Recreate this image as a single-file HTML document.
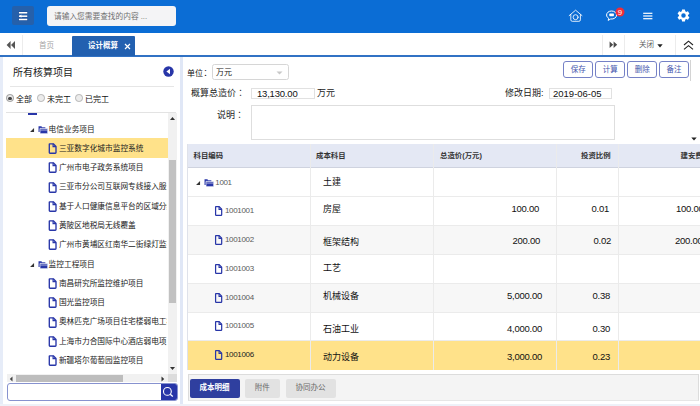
<!DOCTYPE html>
<html lang="zh-CN">
<head>
<meta charset="utf-8">
<title>设计概算</title>
<style>
*{box-sizing:border-box;margin:0;padding:0}
html,body{width:700px;height:406px;overflow:hidden;background:#fff}
body{font-family:"Liberation Sans","Noto Sans CJK SC",sans-serif;font-size:9px;color:#222;position:relative}
.abs{position:absolute}
.jp{font-family:"Noto Sans CJK JP","Noto Sans CJK SC",sans-serif}
#hdr{left:0;top:0;width:700px;height:33px;background:#0b6dd5}
#menu{left:12.2px;top:6.3px;width:22px;height:19px;background:#2560ab;border-radius:2px}
#search{left:47px;top:6px;width:129px;height:20px;background:#f4f4f6;border-radius:3px;font-size:7.7px;color:#707070;line-height:22.6px;padding-left:7px;overflow:hidden;white-space:nowrap}
#tabs{left:0;top:33px;width:700px;height:23px;background:#fff}
#tabline{left:0;top:55px;width:700px;height:2.6px;background:#3172c4}
.vsep{width:1px;background:#ececec;top:35px;height:20px}
#tab1{left:22px;top:35px;width:49px;height:20px;font-size:7.5px;color:#a5a5a5;line-height:21px;text-align:center}
#tab2{left:72px;top:36px;width:63px;height:20px;background:#2260b0;color:#fff;font-size:7.5px;font-weight:bold;line-height:20.5px;padding-left:16px;white-space:nowrap;border-radius:1px 1px 0 0}
#body{left:0;top:57px;width:700px;height:349px;background:#e6ecf8}
#left{left:3.4px;top:57px;width:176.6px;height:347.3px;background:#fff}
#strip{left:180px;top:57px;width:3.2px;height:349px;background:#e0e7f6}
#main{left:183.2px;top:57px;width:516.8px;height:347.3px;background:#fff}
.lbl{font-size:9px;color:#222;white-space:nowrap}
.tree{font-size:7.7px;color:#222;white-space:nowrap;line-height:12px}
.btn{top:61.3px;height:16.3px;width:30px;border:1px solid #7581c6;border-radius:3px;background:#fff;color:#4656ad;font-size:7.5px;line-height:15.4px;text-align:center;white-space:nowrap}
.th{top:144.4px;height:23px;font-size:7.4px;font-weight:bold;color:#333;line-height:23px;white-space:nowrap}
.row{left:187px;width:513px;height:29px}
.cell{font-size:9px;color:#111;white-space:nowrap;line-height:14px}
.code{font-size:8px;letter-spacing:-0.34px;color:#5a5a5a;white-space:nowrap;line-height:12px}
.num{font-size:9.5px;letter-spacing:-0.25px;color:#111;white-space:nowrap;text-align:right;line-height:14px}
.bbtn{top:379px;height:18.5px;font-size:7.5px;line-height:18.5px;text-align:center;white-space:nowrap;border-radius:1px}
</style>
</head>
<body>
<!-- header -->
<div id="hdr" class="abs"></div>
<div id="menu" class="abs">
<svg width="22" height="19" viewBox="0 0 22 19" style="display:block"><g fill="#1a4a94"><rect x="6.4" y="5.6" width="9.4" height="2.4"/><rect x="6.4" y="9" width="9.4" height="2.4"/><rect x="6.4" y="12.3" width="9.4" height="2.4"/></g><g fill="#fff"><rect x="6.9" y="6" width="8.4" height="1.55"/><rect x="6.9" y="9.4" width="8.4" height="1.55"/><rect x="6.9" y="12.7" width="8.4" height="1.55"/><path d="M7.2 10.2 L9.4 8.6 L9.4 11.8Z"/></g></svg>
</div>
<div id="search" class="abs">请输入您需要查找的内容 ...</div>

<!-- header icons -->
<svg class="abs" style="left:566px;top:6px" width="20" height="20" viewBox="0 0 20 20"><g fill="none" stroke="#fff" stroke-opacity="0.9" stroke-width="0.95" stroke-linejoin="round" stroke-linecap="round"><path d="M3.2 9.6 L9.6 4.2 L16 9.6"/><path d="M4.8 8.6 V13.8 Q4.8 15.3 6.3 15.3 H12.9 Q14.4 15.3 14.4 13.8 V8.6"/><circle cx="9.6" cy="11.2" r="2.5"/></g></svg>
<svg class="abs" style="left:603px;top:4px" width="26" height="22" viewBox="0 0 26 22"><path d="M8.5 7 C5.5 7 3.6 8.9 3.6 11 C3.6 12.4 4.4 13.6 5.7 14.3 L5.2 16.4 L7.6 15 C10.8 15.4 13.6 13.6 13.6 11 C13.6 8.8 11.4 7 8.5 7Z" fill="none" stroke="#fff" stroke-width="1"/><rect x="6.3" y="9.6" width="4.6" height="2.6" rx="0.6" fill="#fff"/><circle cx="17" cy="8" r="4.5" fill="#ee2d3a"/><text x="17" y="10.8" font-size="7.8" fill="#fff" text-anchor="middle" font-family="Liberation Sans, sans-serif">9</text></svg>
<svg class="abs" style="left:642px;top:10px" width="12" height="12" viewBox="0 0 12 12"><g fill="#fff"><rect x="1.2" y="2.7" width="9.2" height="1.2"/><rect x="1.2" y="5.4" width="9.2" height="1.2"/><rect x="1.2" y="8.1" width="9.2" height="1.2"/></g></svg>
<svg class="abs" style="left:676.2px;top:8.3px" width="15" height="15" viewBox="0 0 24 24"><path fill="#fff" d="M19.14 12.94c.04-.3.06-.61.06-.94 0-.32-.02-.64-.07-.94l2.03-1.58a.49.49 0 0 0 .12-.61l-1.92-3.32a.49.49 0 0 0-.59-.22l-2.39.96c-.5-.38-1.03-.7-1.62-.94l-.36-2.54a.48.48 0 0 0-.48-.41h-3.84c-.24 0-.43.17-.47.41l-.36 2.54c-.59.24-1.13.57-1.62.94l-2.39-.96a.49.49 0 0 0-.59.22L2.74 8.87c-.12.21-.08.47.12.61l2.03 1.58c-.05.3-.09.63-.09.94s.02.64.07.94l-2.03 1.58a.49.49 0 0 0-.12.61l1.92 3.32c.12.22.37.29.59.22l2.39-.96c.5.38 1.03.7 1.62.94l.36 2.54c.05.24.24.41.48.41h3.84c.24 0 .44-.17.47-.41l.36-2.54c.59-.24 1.13-.56 1.62-.94l2.39.96c.22.08.47 0 .59-.22l1.92-3.32c.12-.22.07-.47-.12-.61l-2.01-1.58zM12 15.6A3.6 3.6 0 1 1 12 8.4a3.6 3.6 0 0 1 0 7.2z"/></svg>

<!-- tab bar -->
<div id="tabs" class="abs"></div>
<div id="tabline" class="abs"></div>
<svg class="abs" style="left:6px;top:40px" width="10" height="10" viewBox="0 0 10 10"><path d="M4.6 1 L4.6 9 L0.6 5Z M9 1 L9 9 L5 5Z" fill="#555"/></svg>
<div class="abs vsep" style="left:22px"></div>
<div id="tab1" class="abs">首页</div>
<div id="tab2" class="abs">设计概算<svg style="position:absolute;left:52.2px;top:7.3px" width="7" height="7" viewBox="0 0 7 7"><path d="M1 1 L6 6 M6 1 L1 6" stroke="#fff" stroke-width="1.2" fill="none"/></svg></div>
<div class="abs vsep" style="left:602px"></div>
<svg class="abs" style="left:609.2px;top:41.4px" width="9" height="7.4" viewBox="0 0 9 7" preserveAspectRatio="none"><path d="M0.6 0.4 L4.2 3.5 L0.6 6.6Z M4.6 0.4 L8.2 3.5 L4.6 6.6Z" fill="#4a4a4a"/></svg>
<div class="abs vsep" style="left:624px"></div>
<div class="abs" style="left:639px;top:39.2px;font-size:7.5px;color:#606060;line-height:12px;white-space:nowrap">关闭</div>
<svg class="abs" style="left:656.5px;top:44px" width="6" height="4" viewBox="0 0 6 4"><path d="M0.3 0.3 L5.7 0.3 L3 3.6Z" fill="#222"/></svg>
<div class="abs vsep" style="left:675px"></div>
<svg class="abs" style="left:683px;top:40px" width="11" height="11" viewBox="0 0 11 11"><path d="M1 5 L5.5 1.2 L10 5 M1 9.4 L5.5 5.6 L10 9.4" stroke="#222" stroke-width="1.1" fill="none"/></svg>

<!-- body -->
<div id="body" class="abs"></div>
<div id="left" class="abs"></div>
<div id="strip" class="abs"></div>
<div id="main" class="abs"></div>

<div class="abs" style="left:0;top:404.3px;width:700px;height:1.7px;background:#eef1f8"></div>
<!-- left panel -->
<div class="abs" style="left:13px;top:65.4px;font-size:10px;color:#222;line-height:15px;white-space:nowrap">所有核算项目</div>
<svg class="abs" style="left:163px;top:66px" width="11" height="11" viewBox="0 0 11 11"><circle cx="5.5" cy="5.5" r="5.2" fill="#2836a8"/><path d="M7 2.8 L7 8.2 L3.4 5.5Z" fill="#fff"/></svg>
<div class="abs" style="left:10px;top:86px;width:164px;height:1px;background:#e6e6e6"></div>
<!-- radios -->
<div class="abs" style="left:6.2px;top:94.3px;width:7.6px;height:7.6px;border-radius:50%;border:1px solid #9a9a9a;background:#e8e8e8"></div>
<div class="abs" style="left:8.4px;top:96.5px;width:3.2px;height:3.2px;border-radius:50%;background:#444"></div>
<div class="abs" style="left:16px;top:94px;font-size:8px;line-height:12px;color:#111;white-space:nowrap">全部</div>
<div class="abs" style="left:37.2px;top:94.3px;width:7.6px;height:7.6px;border-radius:50%;border:1px solid #b5b5b5;background:#ececec"></div>
<div class="abs" style="left:47px;top:94px;font-size:8px;line-height:12px;color:#111;white-space:nowrap">未完工</div>
<div class="abs" style="left:75.2px;top:94.3px;width:7.6px;height:7.6px;border-radius:50%;border:1px solid #b5b5b5;background:#ececec"></div>
<div class="abs" style="left:85px;top:94px;font-size:8px;line-height:12px;color:#111;white-space:nowrap">已完工</div>
<div class="abs" style="left:6px;top:112px;width:170px;height:1px;background:#e3e3e3"></div>
<div class="abs" style="left:28px;top:113px;width:9px;height:1.5px;background:#2836a8"></div>

<!-- tree selected -->
<div class="abs" style="left:6px;top:138px;width:162px;height:20px;background:#ffe28a"></div>
<!-- tree scroll vertical -->
<div class="abs" style="left:168px;top:113px;width:9px;height:261px;background:#f1f1f1"></div>
<div class="abs" style="left:169px;top:160px;width:7px;height:143px;background:#c1c1c1"></div>
<svg class="abs" style="left:169px;top:116px" width="7" height="5" viewBox="0 0 7 5"><path d="M1 4 L3.5 1 L6 4Z" fill="#333"/></svg>
<svg class="abs" style="left:169px;top:366px" width="7" height="5" viewBox="0 0 7 5"><path d="M1 1 L3.5 4 L6 1Z" fill="#333"/></svg>

<!-- tree items -->
<svg width="0" height="0" style="position:absolute"><defs>
<symbol id="doc" viewBox="0 0 9 11"><path d="M1.3 1 Q1.3 0.8 1.6 0.8 H5.3 L8 3.5 V9.5 Q8 10.2 7.3 10.2 H2 Q1.3 10.2 1.3 9.5Z" fill="none" stroke="#2836a8" stroke-width="1.35" stroke-linejoin="round"/><path d="M5.1 0.8 V3.7 H8" fill="none" stroke="#2836a8" stroke-width="1.2"/></symbol>
<symbol id="fold" viewBox="0 0 10 9"><path d="M0.5 1.2 H3.2 L4 2.2 H7 V6.6 H0.5Z" fill="#2836a8"/><path d="M1.9 3.2 H9.3 V8.3 H1.9Z" fill="#2836a8" stroke="#fff" stroke-width="0.7"/><rect x="2.3" y="4.4" width="6.7" height="0.7" fill="#fff" opacity="0.85"/></symbol>
<symbol id="exp" viewBox="0 0 5 5"><path d="M4.2 0.9 V4.2 H0.9Z" fill="#333"/></symbol>
</defs></svg>

<svg class="abs" style="left:28.6px;top:126.8px" width="6" height="6"><use href="#exp"/></svg>
<svg class="abs" style="left:37.6px;top:124.8px" width="10.5" height="9.5"><use href="#fold"/></svg>
<div class="abs tree" style="left:48.6px;top:123.6px">电信业务项目</div>
<svg class="abs" style="left:47.8px;top:143.0px" width="9" height="11"><use href="#doc"/></svg>
<div class="abs tree" style="left:58.9px;top:142.9px">三亚数字化城市监控系统</div>
<svg class="abs" style="left:47.8px;top:162.3px" width="9" height="11"><use href="#doc"/></svg>
<div class="abs tree" style="left:58.9px;top:162.2px">广州市电子政务系统项目</div>
<svg class="abs" style="left:47.8px;top:181.5px" width="9" height="11"><use href="#doc"/></svg>
<div class="abs tree" style="left:58.9px;top:181.4px;width:108.2px;overflow:hidden">三亚市分公司互联网专线接入服务</div>
<svg class="abs" style="left:47.8px;top:200.8px" width="9" height="11"><use href="#doc"/></svg>
<div class="abs tree" style="left:58.9px;top:200.7px;width:108.2px;overflow:hidden">基于人口健康信息平台的区域分级</div>
<svg class="abs" style="left:47.8px;top:220.1px" width="9" height="11"><use href="#doc"/></svg>
<div class="abs tree" style="left:58.9px;top:220.0px">黄陂区地税局无线覆盖</div>
<svg class="abs" style="left:47.8px;top:239.4px" width="9" height="11"><use href="#doc"/></svg>
<div class="abs tree" style="left:58.9px;top:239.3px;width:108.2px;overflow:hidden">广州市黄埔区红南华二街绿灯监控</div>
<svg class="abs" style="left:28.6px;top:261.8px" width="6" height="6"><use href="#exp"/></svg>
<svg class="abs" style="left:37.6px;top:259.8px" width="10.5" height="9.5"><use href="#fold"/></svg>
<div class="abs tree" style="left:48.6px;top:258.6px">监控工程项目</div>
<svg class="abs" style="left:47.8px;top:277.9px" width="9" height="11"><use href="#doc"/></svg>
<div class="abs tree" style="left:58.9px;top:277.8px">南昌研究所监控维护项目</div>
<svg class="abs" style="left:47.8px;top:297.2px" width="9" height="11"><use href="#doc"/></svg>
<div class="abs tree" style="left:58.9px;top:297.1px">国光监控项目</div>
<svg class="abs" style="left:47.8px;top:316.5px" width="9" height="11"><use href="#doc"/></svg>
<div class="abs tree" style="left:58.9px;top:316.4px;width:108.2px;overflow:hidden">奥林匹克广场项目住宅楼弱电工程</div>
<svg class="abs" style="left:47.8px;top:335.8px" width="9" height="11"><use href="#doc"/></svg>
<div class="abs tree" style="left:58.9px;top:335.7px;width:108.2px;overflow:hidden">上海市力合国际中心酒店弱电项目</div>
<svg class="abs" style="left:47.8px;top:355.1px" width="9" height="11"><use href="#doc"/></svg>
<div class="abs tree" style="left:58.9px;top:355.0px">新疆塔尔葡萄园监控项目</div>
<!-- tree bottom scrollbars (outer) -->
<div class="abs" style="left:6.8px;top:374.4px;width:170px;height:8px;background:#f1f1f1"></div>
<div class="abs" style="left:16.4px;top:374.8px;width:106.6px;height:7.2px;background:#bdbdbd"></div>
<svg class="abs" style="left:9px;top:375.5px" width="4" height="6" viewBox="0 0 4 6"><path d="M3.5 0.6 L0.8 3 L3.5 5.4Z" fill="#444"/></svg>
<svg class="abs" style="left:161px;top:376px" width="4" height="6" viewBox="0 0 4 6"><path d="M0.5 0.6 L3.2 3 L0.5 5.4Z" fill="#333"/></svg>
<div class="abs" style="left:168px;top:374.4px;width:8.8px;height:8px;background:#dcdcdc"></div>
<!-- search -->
<div class="abs" style="left:6.5px;top:383.4px;width:171px;height:17.4px;border:1px solid #8792cf;border-radius:3px;background:#fff"></div>
<div class="abs" style="left:161.3px;top:384.2px;width:15.3px;height:15.6px;background:#2836a8;border-radius:0 2px 2px 0"></div>
<svg class="abs" style="left:162.2px;top:386px" width="12" height="12" viewBox="0 0 12 12"><circle cx="5.4" cy="5.4" r="3.9" fill="none" stroke="#fff" stroke-width="1.1"/><path d="M8.2 8.2 L10.8 10.6" stroke="#fff" stroke-width="1.3"/></svg>

<!-- main form -->
<div class="abs" style="left:187px;top:66.5px;font-size:8px;line-height:12px;color:#111;white-space:nowrap">单位<span class="jp" lang="ja" style="margin-left:-1.5px">：</span></div>
<div class="abs" style="left:212px;top:63.6px;width:76.8px;height:16.6px;border:1px solid #d6d6d6;border-radius:2.5px;background:#fff"></div>
<div class="abs" style="left:216px;top:67px;font-size:8px;line-height:12px;color:#222;white-space:nowrap">万元</div>
<svg class="abs" style="left:276px;top:71px" width="7" height="4" viewBox="0 0 7 4"><path d="M0.5 0.4 H6.5 L3.5 3.6Z" fill="#c8c8c8"/></svg>

<div class="abs btn" style="left:563.2px">保存</div>
<div class="abs btn" style="left:595.2px">计算</div>
<div class="abs btn" style="left:627.2px">删除</div>
<div class="abs btn" style="left:659.1px">备注</div>
<div class="abs" style="left:689.7px;top:60px;width:1px;height:20.5px;background:#d4d4d4"></div>

<div class="abs lbl" style="left:191px;top:86px;line-height:14px">概算总造价<span class="jp" lang="ja">：</span></div>
<div class="abs" style="left:251px;top:87.5px;width:64px;height:11.5px;border:1px solid #e1e1e1;background:#fff"></div>
<div class="abs" style="left:257px;top:87px;font-size:9.5px;line-height:14px;color:#111;white-space:nowrap;letter-spacing:-0.2px">13,130.00</div>
<div class="abs lbl" style="left:317px;top:86px;line-height:14px">万元</div>
<div class="abs lbl" style="left:505px;top:86px;line-height:14px">修改日期:</div>
<div class="abs" style="left:548.5px;top:87.5px;width:63.5px;height:11.5px;border:1px solid #e1e1e1;background:#fff"></div>
<div class="abs" style="left:553px;top:87px;font-size:9.5px;line-height:14px;color:#111;white-space:nowrap">2019-06-05</div>

<div class="abs lbl" style="left:217px;top:108px;line-height:14px">说明<span class="jp" lang="ja">：</span></div>
<div class="abs" style="left:251px;top:105px;width:364px;height:35px;border:1px solid #dedede;background:#fff"></div>
<svg class="abs" style="left:691px;top:137px" width="6" height="4" viewBox="0 0 6 4"><path d="M0.3 0.4 H5.7 L3 3.6Z" fill="#222"/></svg>

<!-- table -->
<div class="abs" style="left:187px;top:144.3px;width:513px;height:23.4px;background:#e4e8f4;border-bottom:1px solid #cfd3df"></div>
<div class="abs th" style="left:193.5px">科目编码</div>
<div class="abs th" style="left:316px">成本科目</div>
<div class="abs th" style="left:440px">总造价(万元)</div>
<div class="abs th" style="left:581px">投资比例</div>
<div class="abs th" style="left:680.5px">建安费</div>

<div class="abs row" style="top:168px;background:#fff"></div>
<div class="abs row" style="top:196px;background:#fff"></div>
<div class="abs row" style="top:225px;background:#f7f7f7"></div>
<div class="abs row" style="top:254px;background:#fff"></div>
<div class="abs row" style="top:283.2px;background:#f7f7f7"></div>
<div class="abs row" style="top:312px;background:#fff"></div>
<div class="abs row" style="top:341px;background:#ffe28a;height:28.5px"></div>
<!-- row lines -->
<div class="abs" style="left:187px;top:196px;width:513px;height:1px;background:#ebebeb"></div>
<div class="abs" style="left:187px;top:225px;width:513px;height:1px;background:#ebebeb"></div>
<div class="abs" style="left:187px;top:253.6px;width:513px;height:1px;background:#ebebeb"></div>
<div class="abs" style="left:187px;top:283px;width:513px;height:1px;background:#ebebeb"></div>
<div class="abs" style="left:187px;top:311.8px;width:513px;height:1px;background:#ebebeb"></div>
<div class="abs" style="left:187px;top:340.4px;width:513px;height:1px;background:#ebebeb"></div>
<!-- col lines -->
<div class="abs" style="left:187px;top:144.3px;width:1px;height:226px;background:#dfe2ea"></div>
<div class="abs" style="left:310.4px;top:144.3px;width:1px;height:226px;background:#ebebeb"></div>
<div class="abs" style="left:433.4px;top:144.3px;width:1px;height:226px;background:#ebebeb"></div>
<div class="abs" style="left:556px;top:144.3px;width:1px;height:226px;background:#ebebeb"></div>
<div class="abs" style="left:617.5px;top:144.3px;width:1px;height:226px;background:#ebebeb"></div>

<!-- rows content -->
<svg class="abs" style="left:195.3px;top:179.8px" width="6" height="6"><use href="#exp"/></svg>
<svg class="abs" style="left:203.5px;top:178.3px" width="10.5" height="9.5"><use href="#fold"/></svg>
<div class="abs code" style="left:215.3px;top:176.6px">1001</div>
<div class="abs cell" style="left:323px;top:175.4px">土建</div>

<svg class="abs" style="left:213.6px;top:206.4px" width="9" height="10"><use href="#doc"/></svg>
<div class="abs code" style="left:225px;top:205px">1001001</div>
<div class="abs cell" style="left:323px;top:202px">房屋</div>
<div class="abs num" style="left:479px;top:202px;width:60px">100.00</div>
<div class="abs num" style="left:569px;top:202px;width:40px">0.01</div>
<div class="abs num" style="top:202px;width:50px;text-align:left;left:676px">100.00</div>

<svg class="abs" style="left:213.6px;top:235.4px" width="9" height="10"><use href="#doc"/></svg>
<div class="abs code" style="left:225px;top:234px">1001002</div>
<div class="abs cell" style="left:323px;top:234.6px">框架结构</div>
<div class="abs num" style="left:480px;top:234px;width:60px">200.00</div>
<div class="abs num" style="left:570px;top:234px;width:41px">0.02</div>
<div class="abs num" style="top:234px;width:50px;text-align:left;left:675px">200.00</div>

<svg class="abs" style="left:213.6px;top:264.4px" width="9" height="10"><use href="#doc"/></svg>
<div class="abs code" style="left:225px;top:263px">1001003</div>
<div class="abs cell" style="left:323px;top:261px">工艺</div>

<svg class="abs" style="left:213.6px;top:293.4px" width="9" height="10"><use href="#doc"/></svg>
<div class="abs code" style="left:225px;top:292px">1001004</div>
<div class="abs cell" style="left:323px;top:288.5px">机械设备</div>
<div class="abs num" style="left:480px;top:288.5px;width:62px">5,000.00</div>
<div class="abs num" style="left:570px;top:288.5px;width:40px">0.38</div>

<svg class="abs" style="left:213.6px;top:321.4px" width="9" height="10"><use href="#doc"/></svg>
<div class="abs code" style="left:225px;top:320px">1001005</div>
<div class="abs cell" style="left:323px;top:321.5px">石油工业</div>
<div class="abs num" style="left:480px;top:322px;width:62px">4,000.00</div>
<div class="abs num" style="left:570px;top:322px;width:40px">0.30</div>

<svg class="abs" style="left:213.6px;top:350.2px" width="9" height="10"><use href="#doc"/></svg>
<div class="abs code" style="left:225px;top:348.8px;color:#222">1001006</div>
<div class="abs cell" style="left:323px;top:349.8px">动力设备</div>
<div class="abs num" style="left:480px;top:350px;width:62px">3,000.00</div>
<div class="abs num" style="left:570px;top:350px;width:40px">0.23</div>

<!-- footer -->
<div class="abs" style="left:187.5px;top:374px;width:511px;height:27px;background:#f4f4f4;border:1px solid #dcdcdc;border-bottom-color:#e6e6e6"></div>
<div class="abs bbtn" style="left:189.5px;width:50px;background:#2f3f9f;color:#fff;font-weight:bold;border-radius:2px">成本明细</div>
<div class="abs bbtn" style="left:245px;width:34.5px;background:#e2e2e2;color:#6a6a6a;border-radius:2px">附件</div>
<div class="abs bbtn" style="left:285.5px;width:50px;background:#e2e2e2;color:#6a6a6a;border-radius:2px">协同办公</div>
</body>
</html>
